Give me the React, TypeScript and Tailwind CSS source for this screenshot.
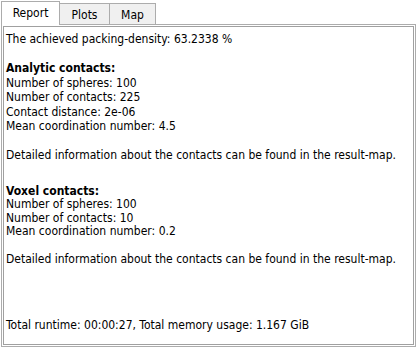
import React from 'react';

const analytic = [
  'Number of spheres: 100',
  'Number of contacts: 225',
  'Contact distance: 2e-06',
  'Mean coordination number: 4.5',
];

const voxel = [
  'Number of spheres: 100',
  'Number of contacts: 10',
  'Mean coordination number: 0.2',
];

const Line = ({ children, bold }: { children?: React.ReactNode; bold?: boolean }) => (
  <div className={`h-[14.5px] leading-[14.5px] whitespace-nowrap ${bold ? 'font-bold' : ''}`}>{children}</div>
);

export default function App() {
  return (
    <div className="w-[417px] h-[347px] bg-white text-black text-[12px] font-['DejaVu_Sans_Condensed','Liberation_Sans',sans-serif] flex flex-col">
      {/* tab bar */}
      <div className="h-[25px] pl-[1px] flex items-end relative z-10">
        <div className="w-[59px] h-[24px] bg-white border border-b-0 border-[#acacac] flex items-center justify-center pb-[1px]">
          Report
        </div>
        <div className="w-[50px] h-[21px] mb-[1px] bg-[#f0f0f0] border border-l-0 border-b-0 border-[#acacac] flex items-center justify-center pt-[1px]">
          Plots
        </div>
        <div className="w-[46px] h-[21px] mb-[1px] bg-[#f0f0f0] border border-l-0 border-b-0 border-[#acacac] flex items-center justify-center pt-[1px]">
          Map
        </div>
      </div>

      {/* pane */}
      <div className="ml-[1px] w-[415px] h-[323px] -mt-[1px] border border-[#acacac] p-[1px]">
        <div className="h-full border border-[#a0a0a0] pl-[2px] pt-[5px] flex flex-col">
          <Line>The achieved packing-density: 63.2338 %</Line>
          <Line />
          <Line bold>Analytic contacts:</Line>
          {analytic.map((t) => (
            <Line key={t}>{t}</Line>
          ))}
          <Line />
          <Line>Detailed information about the contacts can be found in the result-map.</Line>
          <div className="h-[21px]" />
          <Line bold>Voxel contacts:</Line>
          {voxel.map((t) => (
            <div key={t} className="h-[13.7px] leading-[13.7px] whitespace-nowrap">{t}</div>
          ))}
          <div className="h-[13px]" />
          <Line>Detailed information about the contacts can be found in the result-map.</Line>
          <div className="mt-[51px]">
            <Line>Total runtime: 00:00:27, Total memory usage: 1.167 GiB</Line>
          </div>
        </div>
      </div>
    </div>
  );
}
